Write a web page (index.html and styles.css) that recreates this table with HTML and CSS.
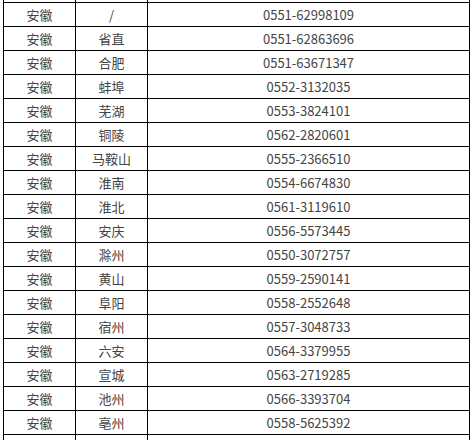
FILE: index.html
```html
<!DOCTYPE html>
<html lang="zh-CN">
<head>
<meta charset="utf-8">
<link rel="stylesheet" href="styles.css">
</head>
<body>
<div class="sheet">
  <div class="grid">
    <div class="c"></div><div class="c"></div><div class="c"></div>
    <div class="c">安徽</div><div class="c">/</div><div class="c num">0551-62998109</div>
    <div class="c">安徽</div><div class="c">省直</div><div class="c num">0551-62863696</div>
    <div class="c">安徽</div><div class="c">合肥</div><div class="c num">0551-63671347</div>
    <div class="c">安徽</div><div class="c">蚌埠</div><div class="c num">0552-3132035</div>
    <div class="c">安徽</div><div class="c">芜湖</div><div class="c num">0553-3824101</div>
    <div class="c">安徽</div><div class="c">铜陵</div><div class="c num">0562-2820601</div>
    <div class="c">安徽</div><div class="c">马鞍山</div><div class="c num">0555-2366510</div>
    <div class="c">安徽</div><div class="c">淮南</div><div class="c num">0554-6674830</div>
    <div class="c">安徽</div><div class="c">淮北</div><div class="c num">0561-3119610</div>
    <div class="c">安徽</div><div class="c">安庆</div><div class="c num">0556-5573445</div>
    <div class="c">安徽</div><div class="c">滁州</div><div class="c num">0550-3072757</div>
    <div class="c">安徽</div><div class="c">黄山</div><div class="c num">0559-2590141</div>
    <div class="c">安徽</div><div class="c">阜阳</div><div class="c num">0558-2552648</div>
    <div class="c">安徽</div><div class="c">宿州</div><div class="c num">0557-3048733</div>
    <div class="c">安徽</div><div class="c">六安</div><div class="c num">0564-3379955</div>
    <div class="c">安徽</div><div class="c">宣城</div><div class="c num">0563-2719285</div>
    <div class="c">安徽</div><div class="c">池州</div><div class="c num">0566-3393704</div>
    <div class="c">安徽</div><div class="c">亳州</div><div class="c num">0558-5625392</div>
    <div class="c"></div><div class="c"></div><div class="c"></div>
  </div>
</div>
</body>
</html>
```
FILE: styles.css
```css
html, body {
  margin: 0;
  padding: 0;
  background: #fff;
  overflow: hidden;
}
.sheet {
  width: 472px;
  height: 440px;
  overflow: hidden;
  padding-left: 3px;
  box-sizing: border-box;
}
.grid {
  display: grid;
  grid-template-columns: 71px 71px 321px;
  grid-auto-rows: 23px;
  gap: 1px;
  padding: 1px;
  background: #000;
  width: max-content;
  margin-top: -22px;
}
.c {
  background: #fff;
  display: flex;
  align-items: center;
  justify-content: center;
  font-family: "Noto Sans CJK SC", "Noto Sans", sans-serif;
  font-size: 13px;
  color: #444;
  line-height: 1;
}
.num {
  font-family: "Noto Sans CJK SC", "Noto Sans", sans-serif;
  font-size: 13px;
}
```
